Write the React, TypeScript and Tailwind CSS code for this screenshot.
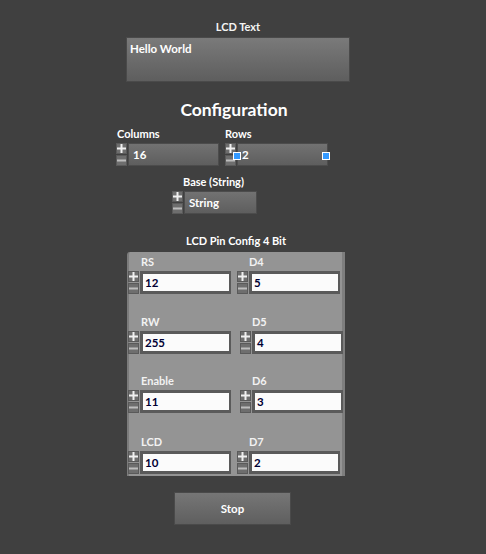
import React from "react";

function Btns() {
  return (
    <div className="flex flex-col gap-[1px] w-[12px] shrink-0">
      <div className="h-[11px] w-[11px] bg-[#6e6e6e] border border-[#5a5a5a] flex items-center justify-center text-white leading-none">
        <svg width="9" height="9" viewBox="0 0 9 9"><rect x="0" y="3.5" width="9" height="2" fill="#f0f0f0" /><rect x="3.5" y="0" width="2" height="9" fill="#f0f0f0" /></svg>
      </div>
      <div className="h-[11px] w-[11px] bg-[#6e6e6e] border border-[#5a5a5a] flex items-center justify-center">
        <svg width="9" height="9" viewBox="0 0 9 9"><rect x="0" y="3.5" width="9" height="2" fill="#bdbdbd" /></svg>
      </div>
    </div>
  );
}

function DarkSpin({ value, w, handles }: { value: string; w: number; handles?: boolean }) {
  return (
    <div className="flex relative">
      <Btns />
      <div
        className="h-[23px] border border-[#4c4c4c] bg-gradient-to-b from-[#727272] to-[#5e5e5e] text-white text-[11.5px] font-bold flex items-center pl-[4px]"
        style={{ width: w }}
      >
        {value}
      </div>
      {handles && (
        <>
          <div className="absolute left-[8px] top-[9px] w-[8px] h-[8px] bg-[#3399ff] border border-white" />
          <div className="absolute right-[-2px] top-[9px] w-[8px] h-[8px] bg-[#3399ff] border border-white" />
        </>
      )}
    </div>
  );
}

function WhiteSpin({ value }: { value: string }) {
  return (
    <div className="flex">
      <Btns />
      <div className="w-[91px] h-[23px] bg-[#5a5a5a] p-[3px] pr-[2px]">
        <div className="h-full bg-[#fbfbfb] text-[#000033] text-[11.5px] font-bold flex items-center pl-[2px]">{value}</div>
      </div>
    </div>
  );
}

function PinItem({ label, value, labelPad }: { label: string; value: string; labelPad: number }) {
  return (
    <div className="flex flex-col">
      <div className="text-[#f2f2f2] text-[11px] font-bold h-[17px] leading-[15px]" style={{ paddingLeft: labelPad }}>
        {label}
      </div>
      <WhiteSpin value={value} />
    </div>
  );
}

export default function App() {
  return (
    <div
      className="w-[486px] h-[554px] bg-[#404040] overflow-hidden text-white"
      style={{ fontFamily: 'Lato, "Open Sans", sans-serif' }}
    >
      <div className="pt-[19px] ml-[126px] w-[224px] flex flex-col">
        <div className="text-center text-[11px] font-bold leading-[16px] text-[#f4f4f4]">LCD Text</div>
        <div className="mt-[2px] h-[45px] border border-[#4a4a4a] bg-gradient-to-b from-[#7a7a7a] to-[#5e5e5e] text-[11.5px] font-bold pl-[3px] pt-[3px] leading-[16px]">
          Hello World
        </div>
      </div>

      <div className="mt-[17px] ml-[126px] w-[216px] text-center text-[17.5px] font-bold leading-[22px]">Configuration</div>

      <div className="mt-[5px] flex ml-[116px] gap-[6px]">
        <div className="flex flex-col">
          <div className="text-[11px] font-bold leading-[16px] h-[17px] pl-[1px]">Columns</div>
          <DarkSpin value="16" w={91} />
        </div>
        <div className="flex flex-col">
          <div className="text-[11px] font-bold leading-[16px] h-[17px]">Rows</div>
          <DarkSpin value="2" w={91} handles />
        </div>
      </div>

      <div className="mt-[8px] ml-[172px] flex flex-col">
        <div className="text-[11px] font-bold leading-[16px] h-[17px] pl-[11px]">Base (String)</div>
        <DarkSpin value="String" w={73} />
      </div>

      <div className="mt-[19px] ml-[127px] w-[218px] text-center text-[11px] font-bold leading-[16px]">LCD Pin Config 4 Bit</div>

      <div className="mt-[3px] ml-[127px] w-[218px] h-[224px] bg-[#949494] border-l-2 border-l-[#7c7c7c] border-r-[3px] border-r-[#7e7e7e] rounded-tl-[3px] flex flex-col">
        <div className="mt-[2px] flex">
          <div className="ml-[-1px]"><PinItem label="RS" value="12" labelPad={13} /></div>
          <div className="ml-[6px]"><PinItem label="D4" value="5" labelPad={12} /></div>
        </div>
        <div className="mt-[20px] flex">
          <div className="ml-[-1px]"><PinItem label="RW" value="255" labelPad={13} /></div>
          <div className="ml-[9px]"><PinItem label="D5" value="4" labelPad={12} /></div>
        </div>
        <div className="mt-[19px] flex">
          <div className="ml-[-1px]"><PinItem label="Enable" value="11" labelPad={13} /></div>
          <div className="ml-[9px]"><PinItem label="D6" value="3" labelPad={12} /></div>
        </div>
        <div className="mt-[21px] flex">
          <div className="ml-[-1px]"><PinItem label="LCD" value="10" labelPad={13} /></div>
          <div className="ml-[6px]"><PinItem label="D7" value="2" labelPad={12} /></div>
        </div>
      </div>

      <div className="mt-[16px] ml-[174px] w-[117px] h-[33px] border border-[#4a4a4a] bg-gradient-to-b from-[#767676] to-[#5f5f5f] flex items-center justify-center text-[11.5px] font-bold">
        Stop
      </div>
    </div>
  );
}
